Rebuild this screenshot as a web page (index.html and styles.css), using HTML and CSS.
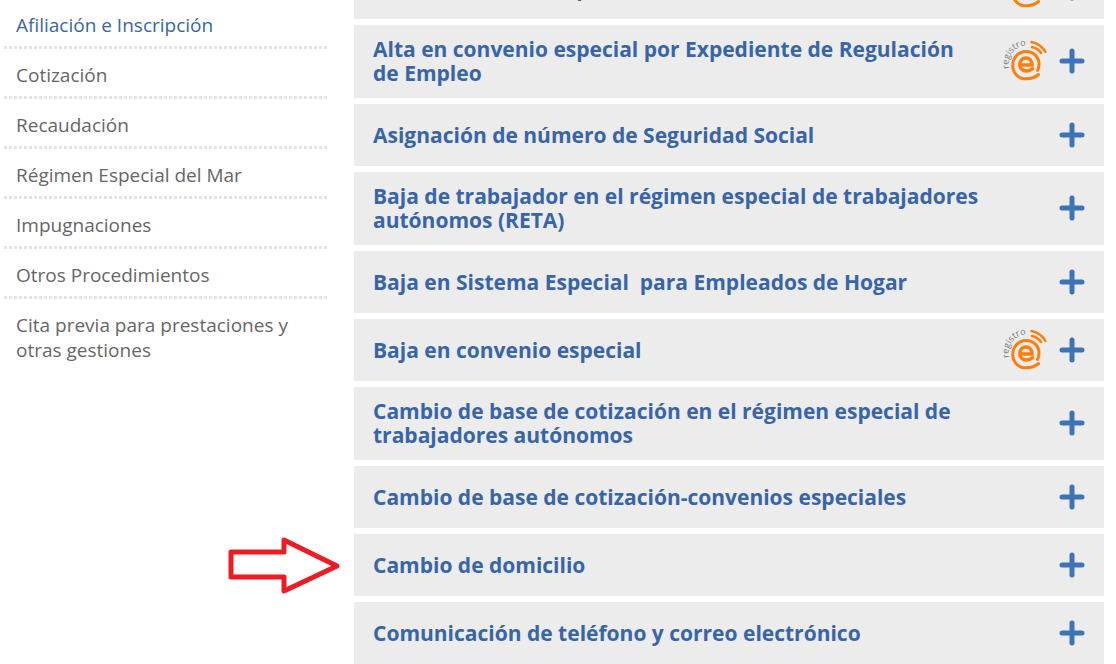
FILE: index.html
```html
<!DOCTYPE html>
<html lang="es">
<head>
    <meta charset="UTF-8">
    <meta name="viewport" content="width=device-width, initial-scale=1.0">
    <title>Afiliación e Inscripción</title>
    <link rel="stylesheet" href="styles.css">
</head>
<body>
    <svg class="sprite" aria-hidden="true">
        <defs>
            <path id="registro-arc" d="M6 28.500A19 19 0 0 1 30 6"/>
        </defs>
        <symbol id="plus" viewBox="0 0 26 26">
            <path d="M13 3v20M3 13h20" fill="none" stroke="#3f73b7" stroke-width="5" stroke-linecap="round"/>
        </symbol>
        <symbol id="registro" viewBox="0 0 44 42">
            <text class="registro-text"><textPath href="#registro-arc">registro</textPath></text>
            <g fill="none" stroke="#ff7d0a" stroke-linecap="round">
                <path d="M35.500 34.500C32 37.500 28 38.800 23 38.800C15 38.800 9.800 33 9.800 25.500C9.800 17.500 15.500 11.500 23 11.500C30.500 11.500 36 17 36 24C36 27 35.500 29 34.500 30.500" stroke-width="3"/>
                <path d="M17.500 25H29C29 20.500 26.500 18 23 18C19.500 18 16.800 20.700 16.800 24.500C16.800 28.500 19.500 31 23.500 31C26 31 28 30.200 29.500 28.800" stroke-width="3.500"/>
                <path d="M29 7Q35 8.500 38 13M28.500 2Q38 4 42.500 12" stroke-width="2.500"/>
            </g>
        </symbol>
    </svg>

    <div class="page">
        <nav class="sidebar">
            <ul class="menu">
                <li class="menu-item"><a class="menu-link active" href="#">Afiliación e Inscripción</a></li>
                <li class="menu-item"><a class="menu-link" href="#">Cotización</a></li>
                <li class="menu-item"><a class="menu-link" href="#">Recaudación</a></li>
                <li class="menu-item"><a class="menu-link" href="#">Régimen Especial del Mar</a></li>
                <li class="menu-item"><a class="menu-link" href="#">Impugnaciones</a></li>
                <li class="menu-item"><a class="menu-link" href="#">Otros Procedimientos</a></li>
                <li class="menu-item"><a class="menu-link" href="#">Cita previa para prestaciones y otras gestiones</a></li>
            </ul>
        </nav>

        <main class="content">
            <ul class="services">
                <li class="service">
                    <button class="service-button" type="button">
                        <span class="service-title">Alta en convenio especial</span>
                        <svg class="registro"><use href="#registro"/></svg>
                        <svg class="plus"><use href="#plus"/></svg>
                    </button>
                </li>
                <li class="service">
                    <button class="service-button" type="button">
                        <span class="service-title">Alta en convenio especial por Expediente de Regulación de Empleo</span>
                        <svg class="registro"><use href="#registro"/></svg>
                        <svg class="plus"><use href="#plus"/></svg>
                    </button>
                </li>
                <li class="service">
                    <button class="service-button" type="button">
                        <span class="service-title">Asignación de número de Seguridad Social</span>
                        <svg class="plus"><use href="#plus"/></svg>
                    </button>
                </li>
                <li class="service">
                    <button class="service-button" type="button">
                        <span class="service-title">Baja de trabajador en el régimen especial de trabajadores autónomos (RETA)</span>
                        <svg class="plus"><use href="#plus"/></svg>
                    </button>
                </li>
                <li class="service">
                    <button class="service-button" type="button">
                        <span class="service-title">Baja en Sistema Especial&nbsp; para Empleados de Hogar</span>
                        <svg class="plus"><use href="#plus"/></svg>
                    </button>
                </li>
                <li class="service">
                    <button class="service-button" type="button">
                        <span class="service-title">Baja en convenio especial</span>
                        <svg class="registro"><use href="#registro"/></svg>
                        <svg class="plus"><use href="#plus"/></svg>
                    </button>
                </li>
                <li class="service">
                    <button class="service-button" type="button">
                        <span class="service-title">Cambio de base de cotización en el régimen especial de trabajadores autónomos</span>
                        <svg class="plus"><use href="#plus"/></svg>
                    </button>
                </li>
                <li class="service">
                    <button class="service-button" type="button">
                        <span class="service-title">Cambio de base de cotización-convenios especiales</span>
                        <svg class="plus"><use href="#plus"/></svg>
                    </button>
                </li>
                <li class="service">
                    <svg class="arrow" viewBox="0 0 112 58" aria-hidden="true">
                        <path d="M3 15H56V3L109 29L56 54V40H3Z" fill="none" stroke="#ed1c24" stroke-width="5" stroke-linejoin="round"/>
                    </svg>
                    <button class="service-button" type="button">
                        <span class="service-title">Cambio de domicilio</span>
                        <svg class="plus"><use href="#plus"/></svg>
                    </button>
                </li>
                <li class="service">
                    <button class="service-button" type="button">
                        <span class="service-title">Comunicación de teléfono y correo electrónico</span>
                        <svg class="plus"><use href="#plus"/></svg>
                    </button>
                </li>
            </ul>
        </main>
    </div>
</body>
</html>
```
FILE: styles.css
```css
* {
    box-sizing: border-box;
}
body {
    margin: 0;
    background-color: #fff;
    font-family: "Open Sans", "Noto Sans", sans-serif;
    overflow: hidden;
}
ul {
    margin: 0;
    padding: 0;
    list-style: none;
}
.sprite {
    position: absolute;
    width: 0;
    height: 0;
}
.page {
    display: grid;
    grid-template-columns: 30% 1fr;
    gap: 20px;
    padding: 0 12px 0 4px;
    height: 100vh;
}
.sidebar {
    margin-top: -1px;
    margin-right: 7px;
}
.menu-item {
    padding: 14px 12px 11px;
    background: repeating-linear-gradient(90deg, #e3e3e3 0, #e3e3e3 3px, transparent 3px, transparent 5px) bottom / 100% 3px no-repeat;
}
.menu-item:last-child {
    background: none;
}
.menu-link {
    display: block;
    color: #666;
    font-size: 19px;
    line-height: 25px;
    text-decoration: none;
}
.menu-link.active {
    color: #3865a8;
}
.menu-link:hover {
    text-decoration: underline;
}
.services {
    display: flex;
    flex-direction: column;
    gap: 6px;
    margin-top: -43px;
}
.service {
    position: relative;
}
.service-button {
    display: flex;
    align-items: center;
    gap: 12px;
    width: 100%;
    min-height: 62px;
    padding: 12px 19px 13px;
    border: none;
    background-color: #ececec;
    color: #3865a8;
    font-family: inherit;
    font-size: 21px;
    font-weight: bold;
    line-height: 24px;
    text-align: left;
    cursor: pointer;
}
.service-button:hover {
    background-color: #e2e2e2;
}
.service-title {
    flex: 1;
}
.registro {
    flex: none;
    width: 44px;
    height: 42px;
    margin: -4px 0 -4px 12px;
}
.registro-text {
    fill: #777;
    font-size: 9px;
    font-weight: normal;
}
.plus {
    flex: none;
    width: 26px;
    height: 26px;
}
.arrow {
    position: absolute;
    top: 3px;
    right: 100%;
    width: 112px;
    height: 58px;
    margin-right: 14px;
}
```
